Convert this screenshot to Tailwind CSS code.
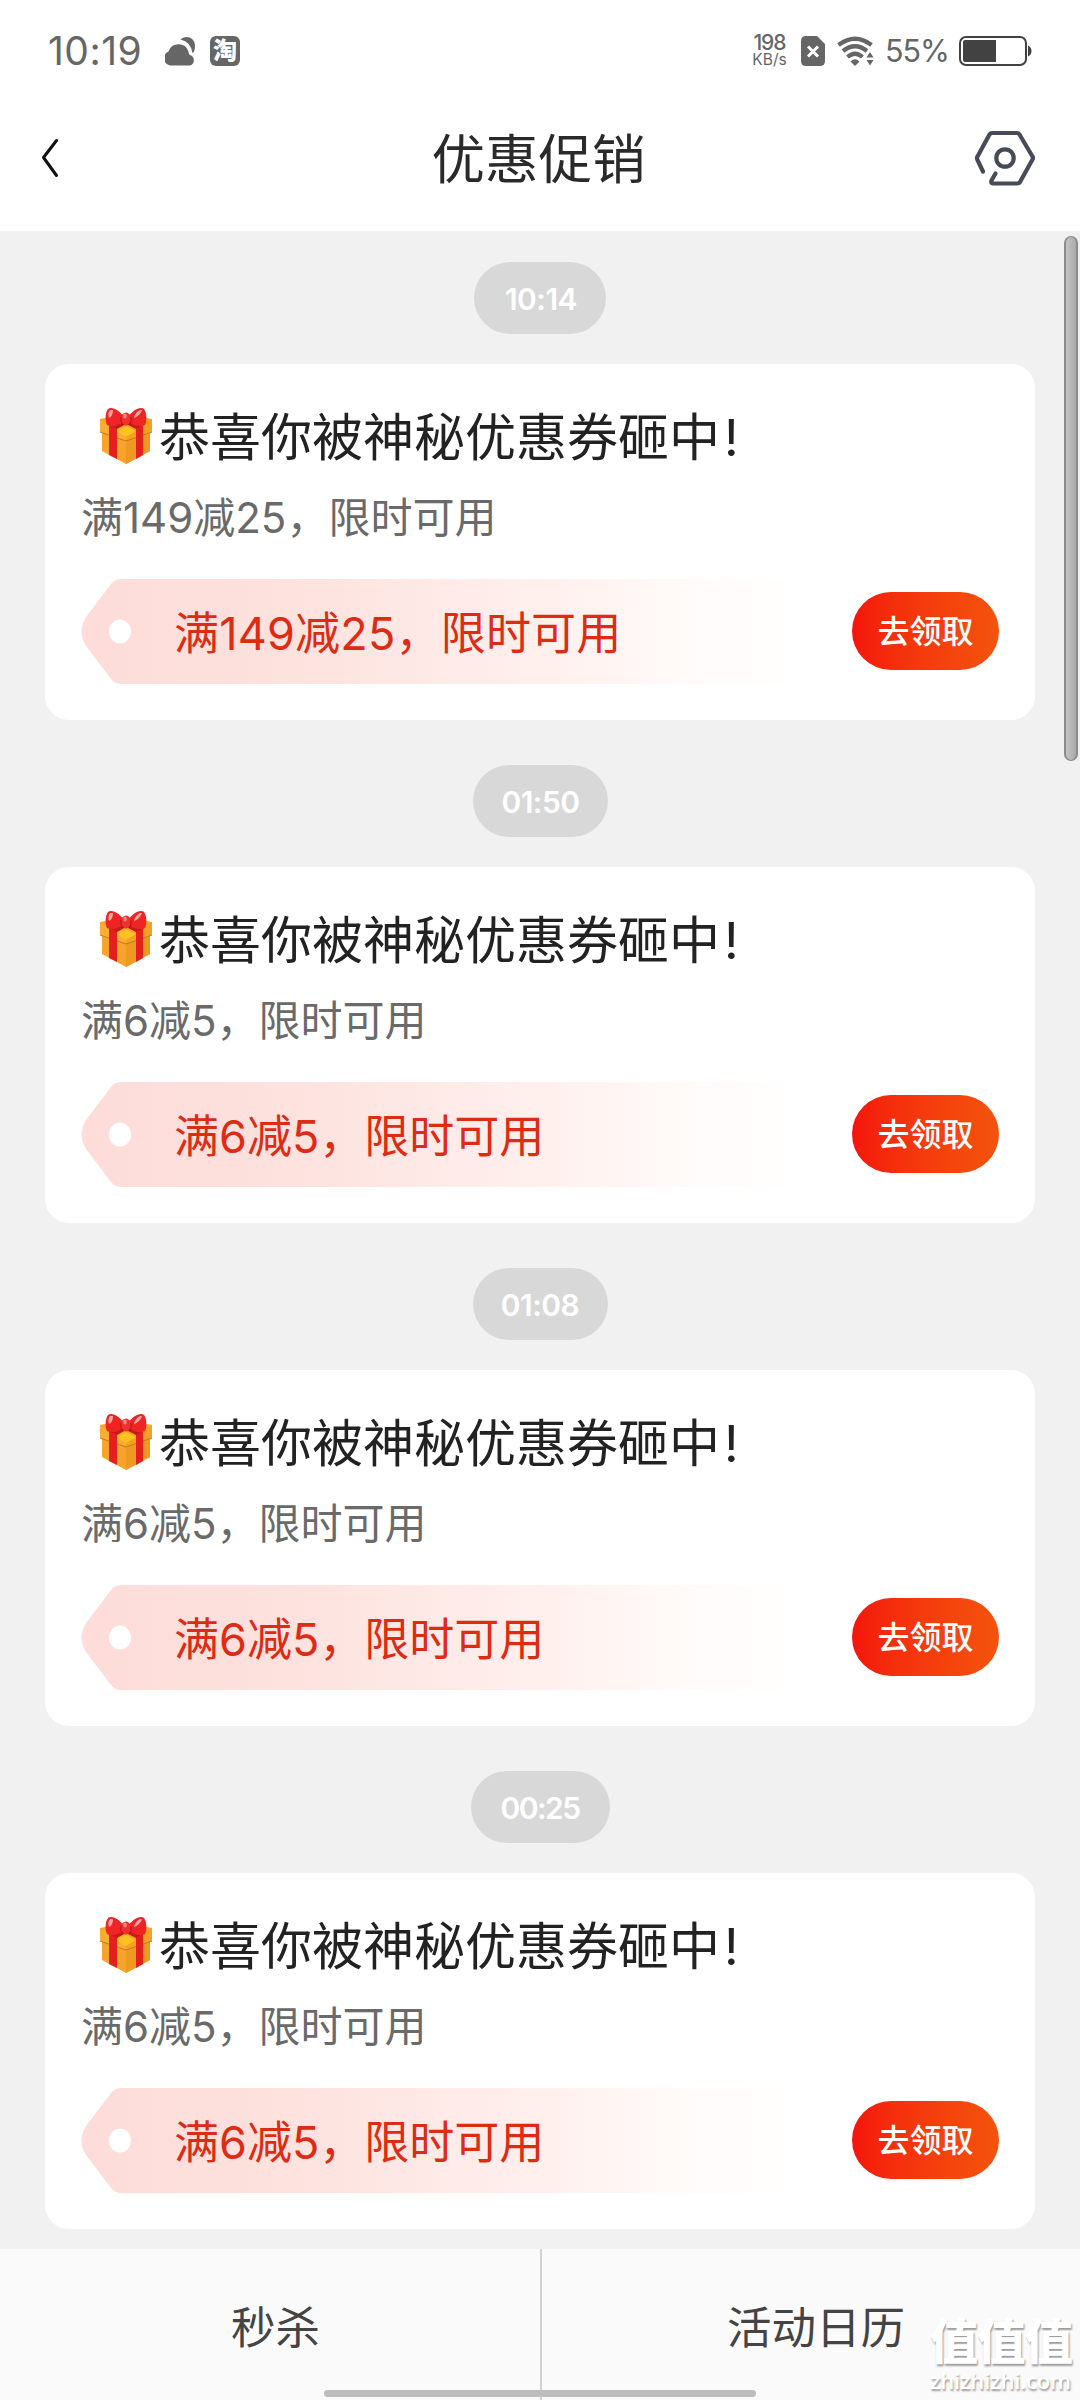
<!DOCTYPE html>
<html lang="zh-CN">
<head>
<meta charset="utf-8">
<title>优惠促销</title>
<script src="https://cdn.jsdelivr.net/npm/@tailwindcss/browser@4"></script>
</head>
<body class="w-[1080px] h-[2400px] overflow-hidden bg-[#f1f1f1] font-['Inter','Noto_Sans_CJK_SC',sans-serif]">
<svg class="absolute size-0">
  <defs>
    <linearGradient id="tagFill" x1="0" x2="1" y1="0" y2="0">
      <stop offset="0" stop-color="#fddcd9"/><stop offset=".3" stop-color="#fde2de"/><stop offset=".65" stop-color="#fff0ee"/><stop offset=".82" stop-color="#fffaf8"/><stop offset="1" stop-color="#ffffff"/>
    </linearGradient>
  </defs>
  <symbol id="tag" viewBox="0 0 720 105">
    <path fill="url(#tagFill)" d="M40 0H720V105H40Q34 105 30 100L5 67Q-4 53 5 38L30 5Q34 0 40 0Z"/>
    <ellipse cx="39" cy="52.500" rx="11" ry="12" fill="#fff"/>
  </symbol>
  <symbol id="gift" viewBox="0 0 54 58">
    <path fill="#f6a52a" d="M1 12L27 7L53 12V24L51 25V44L27 57L3 44V25L1 24Z"/>
    <path fill="#ee9a22" d="M27 32L51 25V44L27 57Z"/>
    <path fill="#f9ae33" d="M1 13L27 22V34L1 25Z"/>
    <path fill="#f3a024" d="M53 13L27 22V34L53 25Z"/>
    <path fill="#fdc21f" d="M18 24L27 19L37 24L27 30Z"/>
    <path fill="none" stroke="#c87a1c" stroke-width="1" d="M1 25L27 34L53 25"/>
    <path fill="#e5201c" d="M10 17L18 21V52L10 48ZM44 17L37 21V52L44 48Z"/>
    <path fill="#c71a18" d="M8 17L27 14L46 17L37 22L27 17L18 22Z"/>
    <path fill="#ee2524" d="M26 12C22 4 13 -1 9 2C6 6 6 14 8 18C14 21 22 18 26 12ZM28 12C32 4 41 -1 45 2C48 6 48 14 46 18C40 21 32 18 28 12Z"/>
    <path fill="#f9a5a5" d="M11 3C9 5 9 9 10 11C13 10 14 6 14 3ZM41 3C37 5 35 9 35 11C39 10 42 6 43 3Z"/>
    <ellipse cx="27" cy="12" rx="5" ry="6.500" fill="#f0302c"/>
    <ellipse cx="26" cy="9" rx="1.800" ry="2.500" fill="#f88"/>
    <path fill="none" stroke="#b01414" stroke-width="1" d="M22 10Q21 15 24 18M32 10Q33 15 30 18"/>
  </symbol>
</svg>

<div class="relative flex h-[2400px] w-[1080px] flex-col">
  <!-- status bar -->
  <header class="h-[231px] shrink-0 bg-white">
    <div class="flex h-[102px] items-center pl-[48px] text-[#666]">
      <span class="w-[117px] text-[39px] leading-[44px] tracking-[0.5px]">10:19</span>
      <svg class="h-[30px] w-[31px]" viewBox="0 0 31 30" fill="#666"><path d="M7 29.500A7.300 7.300 0 0 1 3.500 15.500A10.500 10.500 0 0 1 23.500 15.500Q23.500 18.500 25 19A5.500 5.500 0 0 1 25 29.500Z"/><path d="M15.500 3.500C20-1.500 30 1 30 9.500C30 13 29.500 16 27.500 17Q26 6 15.500 3.500Z"/></svg>
      <span class="ml-[14px] flex size-[30px] items-center justify-center rounded-[6px] bg-[#666] text-[24px] leading-[30px] font-black text-white">淘</span>
      <span class="ml-[511px] flex w-[37px] flex-col items-center">
        <span class="text-[21px] leading-[17px] font-medium tracking-[-1px]">198</span>
        <span class="mt-[1px] text-[15.500px] leading-[16px]">KB/s</span>
      </span>
      <svg class="ml-[13px] h-[30px] w-[24px]" viewBox="0 0 24 30"><path fill="#666" d="M5 0H16L24 8V25Q24 30 19 30H5Q0 30 0 25V5Q0 0 5 0Z"/><path stroke="#fff" stroke-width="3" d="M7 10.500L17 20.500M17 10.500L7 20.500"/></svg>
      <svg class="ml-[12px] h-[30px] w-[37px]" viewBox="0 0 37 30" fill="none" stroke="#666" stroke-width="4.200"><path d="M1.500 9Q18 -3.500 34.500 9"/><path d="M6 15Q18 5.500 30 15"/><path d="M10.500 21Q18 14.500 25.500 21"/><path fill="#666" stroke="none" d="M13.500 25.500Q18 21 22.500 25.500L18 30ZM33 16L36.500 21.500H29.500ZM33 29.500L36.500 24H29.500Z"/></svg>
      <span class="ml-[11px] w-[74px] text-[30.500px] leading-[34px] tracking-[-1px] whitespace-nowrap">55%</span>
      <svg class="h-[30px] w-[73px]" viewBox="0 0 73 30"><rect x="1" y="1" width="66" height="28" rx="6" fill="none" stroke="#424242" stroke-width="2"/><path fill="#424242" d="M4 6Q4 4 6 4H37V26H6Q4 26 4 24ZM69 9.500Q72.500 11 72.500 15T69 20.500Z"/></svg>
    </div>
    <div class="flex h-[112px] items-center justify-between pr-[44px] pl-[41px]">
      <svg class="h-[40px] w-[62px]" viewBox="0 0 62 40"><path d="M15.500 2.500L2.500 19.500L15.500 37.500" fill="none" stroke="#111" stroke-width="3" stroke-linecap="round" stroke-linejoin="round"/></svg>
      <h1 class="pt-[4px] text-[53.500px] leading-[64px] text-[#2a2a2a]">优惠促销</h1>
      <svg class="h-[56px] w-[62px]" viewBox="0 0 62 56" fill="none" stroke="#474b57" stroke-width="4.200" stroke-linecap="round" stroke-linejoin="round"><path d="M9 41.500L3.500 30Q2.500 28 3.500 26.500L15.500 4.500Q16.500 3 18 3H43Q44.500 3 45.500 4.500L58.500 26.500Q59.500 28 58.500 29.500L46 52Q45 53.500 43.500 53.500H19.500Q16.500 53.500 17.500 50.500L21.500 43.500"/><circle cx="31" cy="28" r="8.700"/></svg>
    </div>
  </header>

  <main class="flex h-[2018px] shrink-0 flex-col items-center px-[45px] pt-[31px]">
    <time class="flex h-[72px] w-[132px] shrink-0 items-center justify-center rounded-full bg-[#d8d8d8] pt-[2px] pl-[2px] text-[30px] font-semibold tracking-[-0.5px] text-white">10:14</time>
    <article class="mt-[30px] mb-[45px] h-[356px] w-full shrink-0 rounded-[24px] bg-white px-[36px] pt-[38px]">
      <h2 class="flex h-[68px] items-center pl-[18px] text-[51px] leading-[68px] text-[#222]"><svg class="mr-[6px] h-[58px] w-[54px]"><use href="#gift"/></svg><span class="pt-[3px]">恭喜你被神秘优惠券砸中<span class="pl-[4px]">!</span></span></h2>
      <p class="mt-[18px] text-[42px] leading-[60px] text-[#6a6a6a]">满149减25，限时可用</p>
      <div class="mt-[31px] grid h-[105px] grid-cols-1 items-center">
        <svg class="col-start-1 row-start-1 h-[105px] w-[720px]"><use href="#tag"/></svg>
        <div class="col-start-1 row-start-1 flex items-center justify-between pl-[93px]"><span class="pt-[4px] text-[45px] leading-[60px] tracking-[0.2px] text-[#dd2b14]">满149减25，限时可用</span><button class="mb-px h-[78px] w-[147px] rounded-full bg-linear-to-r from-[#f5120c] to-[#f4530d] pt-px text-[32px] leading-[78px] font-medium text-white">去领取</button></div>
      </div>
    </article>

    <time class="flex h-[72px] w-[135px] shrink-0 items-center justify-center rounded-full bg-[#d8d8d8] pt-[2px] pl-px text-[30px] font-semibold tracking-[-0.5px] text-white">01:50</time>
    <article class="mt-[30px] mb-[45px] h-[356px] w-full shrink-0 rounded-[24px] bg-white px-[36px] pt-[38px]">
      <h2 class="flex h-[68px] items-center pl-[18px] text-[51px] leading-[68px] text-[#222]"><svg class="mr-[6px] h-[58px] w-[54px]"><use href="#gift"/></svg><span class="pt-[3px]">恭喜你被神秘优惠券砸中<span class="pl-[4px]">!</span></span></h2>
      <p class="mt-[18px] text-[42px] leading-[60px] text-[#6a6a6a]">满6减5，限时可用</p>
      <div class="mt-[31px] grid h-[105px] grid-cols-1 items-center">
        <svg class="col-start-1 row-start-1 h-[105px] w-[720px]"><use href="#tag"/></svg>
        <div class="col-start-1 row-start-1 flex items-center justify-between pl-[93px]"><span class="pt-[4px] text-[45px] leading-[60px] text-[#dd2b14]">满6减5，限时可用</span><button class="mb-px h-[78px] w-[147px] rounded-full bg-linear-to-r from-[#f5120c] to-[#f4530d] pt-px text-[32px] leading-[78px] font-medium text-white">去领取</button></div>
      </div>
    </article>

    <time class="flex h-[72px] w-[135px] shrink-0 items-center justify-center rounded-full bg-[#d8d8d8] pt-[2px] text-[30px] font-semibold tracking-[-0.5px] text-white">01:08</time>
    <article class="mt-[30px] mb-[45px] h-[356px] w-full shrink-0 rounded-[24px] bg-white px-[36px] pt-[38px]">
      <h2 class="flex h-[68px] items-center pl-[18px] text-[51px] leading-[68px] text-[#222]"><svg class="mr-[6px] h-[58px] w-[54px]"><use href="#gift"/></svg><span class="pt-[3px]">恭喜你被神秘优惠券砸中<span class="pl-[4px]">!</span></span></h2>
      <p class="mt-[18px] text-[42px] leading-[60px] text-[#6a6a6a]">满6减5，限时可用</p>
      <div class="mt-[31px] grid h-[105px] grid-cols-1 items-center">
        <svg class="col-start-1 row-start-1 h-[105px] w-[720px]"><use href="#tag"/></svg>
        <div class="col-start-1 row-start-1 flex items-center justify-between pl-[93px]"><span class="pt-[4px] text-[45px] leading-[60px] text-[#dd2b14]">满6减5，限时可用</span><button class="mb-px h-[78px] w-[147px] rounded-full bg-linear-to-r from-[#f5120c] to-[#f4530d] pt-px text-[32px] leading-[78px] font-medium text-white">去领取</button></div>
      </div>
    </article>

    <time class="flex h-[72px] w-[139px] shrink-0 items-center justify-center rounded-full bg-[#d8d8d8] pt-[2px] text-[30px] font-semibold tracking-[-1.5px] text-white">00:25</time>
    <article class="mt-[30px] h-[356px] w-full shrink-0 rounded-[24px] bg-white px-[36px] pt-[38px]">
      <h2 class="flex h-[68px] items-center pl-[18px] text-[51px] leading-[68px] text-[#222]"><svg class="mr-[6px] h-[58px] w-[54px]"><use href="#gift"/></svg><span class="pt-[3px]">恭喜你被神秘优惠券砸中<span class="pl-[4px]">!</span></span></h2>
      <p class="mt-[18px] text-[42px] leading-[60px] text-[#6a6a6a]">满6减5，限时可用</p>
      <div class="mt-[31px] grid h-[105px] grid-cols-1 items-center">
        <svg class="col-start-1 row-start-1 h-[105px] w-[720px]"><use href="#tag"/></svg>
        <div class="col-start-1 row-start-1 flex items-center justify-between pl-[93px]"><span class="pt-[4px] text-[45px] leading-[60px] text-[#dd2b14]">满6减5，限时可用</span><button class="mb-px h-[78px] w-[147px] rounded-full bg-linear-to-r from-[#f5120c] to-[#f4530d] pt-px text-[32px] leading-[78px] font-medium text-white">去领取</button></div>
      </div>
    </article>
  </main>

  <nav class="flex h-[151px] shrink-0 bg-[#fafafa] text-[44.500px] leading-[64px] text-[#444]">
    <a class="w-[540px] pt-[47px] pl-[11px] text-center">秒杀</a>
    <span class="w-[2px] bg-[#d2d2d2]"></span>
    <a class="w-[538px] pt-[47px] pl-[10px] text-center">活动日历</a>
  </nav>

  <!-- overlays: scroll thumb, gesture bar, watermark -->
  <div class="absolute top-[236px] left-[1064px] h-[525px] w-[14px] rounded-full border-x-2 border-y border-[#8c8c8c] bg-linear-to-r from-[#c4c4c4] to-[#aaa]"></div>
  <div class="absolute top-[2390px] left-[324px] h-[7px] w-[432px] rounded-full bg-[#bdbdbd]"></div>
  <div class="absolute top-[2314px] left-[930px] w-[144px] text-white [text-shadow:1px_2px_2px_#999]">
    <div class="text-[48px] leading-[56px] font-black tracking-[-0.500px] whitespace-nowrap">值值值</div>
    <div class="font-['Open_Sans'] text-[22px] leading-[20px] font-semibold tracking-[-0.2px] whitespace-nowrap">zhizhizhi.com</div>
  </div>
</div>
</body>
</html>
